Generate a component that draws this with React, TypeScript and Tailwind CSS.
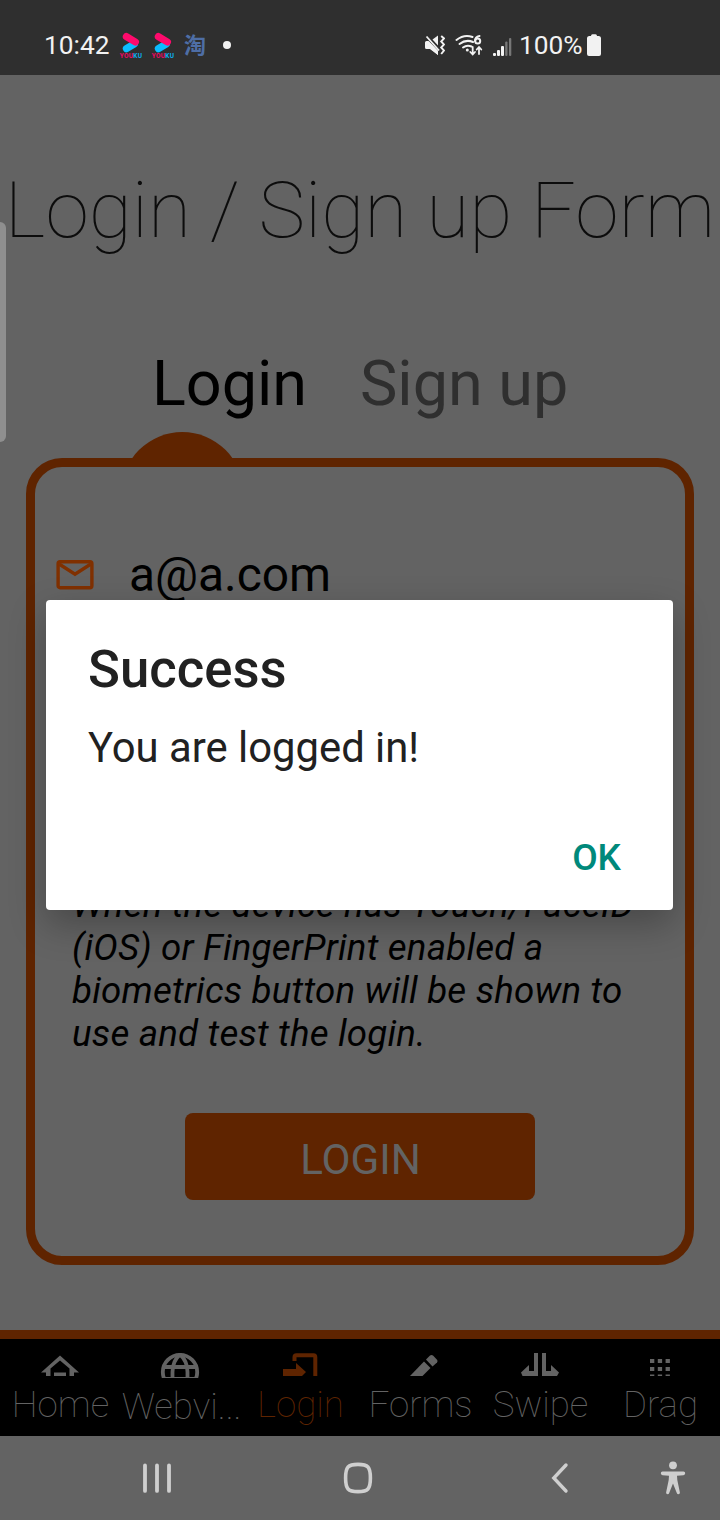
import type { ReactNode } from "react";

function YoukuIcon() {
  return (
    <div className="flex w-[22px] flex-col items-center">
      <svg width="18" height="21" viewBox="0 0 18 21">
        <line x1="4.4" y1="16.6" x2="12.4" y2="11.8" stroke="#0bbcff" strokeWidth="7.2" strokeLinecap="round" />
        <line x1="4.4" y1="4.6" x2="13.4" y2="10" stroke="#ff0a6c" strokeWidth="7.2" strokeLinecap="round" />
      </svg>
      <div className="mt-px flex h-[5px] items-center text-[6.5px] leading-[5px] font-bold tracking-[0.3px]">
        <span className="text-[#f00a68]">YOU</span>
        <span className="text-[#0bb0f0]">KU</span>
      </div>
    </div>
  );
}

function StatusBar() {
  return (
    <header className="flex h-[75px] shrink-0 items-start bg-[#2f2f2f] pt-[30px] pl-[44px] text-[#f2f2f2]">
      <div className="w-[76px] text-[26.3px] leading-[30px]">10:42</div>
      <div className="flex gap-[10px] pt-[2px]">
        <YoukuIcon />
        <YoukuIcon />
      </div>
      <div className="-mt-[2px] ml-[10px] w-[22px] font-['Noto_Sans_CJK_SC',sans-serif] text-[22px] leading-[30px] font-bold text-[#4e6ea6]">淘</div>
      <div className="mt-[11px] ml-[17px] size-[8px] rounded-full bg-[#f2f2f2]" />
      <svg className="mt-[3px] ml-[194px]" width="20" height="24" viewBox="0 0 20 24" fill="#f2f2f2">
        <path d="M0 9.5Q0 8 1.5 8H3.5L13 18V22L5.5 16H1.5Q0 16 0 14.5Z" />
        <path d="M7.5 6.5L13 2.5V12.5Z" />
        <path d="M1.5 3.5L14 17.5" stroke="#f2f2f2" strokeWidth="1.8" />
        <path d="M3.5 8L13 18V22L5 16Z" />
        <path d="M16.2 3L19 5.5L16.2 8.5L19 11.5L16.2 14.5L19 17.5L16.2 21" fill="none" stroke="#f2f2f2" strokeWidth="1.9" />
      </svg>
      <svg className="mt-[4px] ml-[10px]" width="28" height="24" viewBox="0 0 28 24" fill="none" stroke="#f2f2f2" strokeWidth="2" strokeLinecap="round">
        <path d="M1.5 6Q9 0 17.5 3" />
        <path d="M4.5 10Q11 5 18 8" />
        <path d="M8 13.5Q12 10.5 16.5 12.5" />
        <circle cx="12.3" cy="16" r="1.5" fill="#f2f2f2" stroke="none" />
        <path d="M24.5 2Q20 3 20 7" />
        <circle cx="22.7" cy="7" r="2.5" />
        <path d="M17.7 13V20M15.3 18L17.7 20.5L20 18M24 20V13.5M21.7 15.5L24 13L26.3 15.5" strokeWidth="1.8" />
      </svg>
      <svg className="mt-[6px] ml-[10px]" width="20" height="21" viewBox="0 0 20 21">
        <rect x="0" y="17" width="3" height="3" rx="1" fill="#f2f2f2" />
        <rect x="4" y="14" width="3" height="6" rx="1" fill="#f2f2f2" />
        <rect x="8" y="10" width="3" height="10" rx="1" fill="#f2f2f2" />
        <rect x="12.2" y="5.5" width="2.3" height="14.5" rx="1" fill="#777" />
        <rect x="16" y="2" width="2.3" height="18" rx="1" fill="#777" />
      </svg>
      <div className="ml-[6px] w-[68px] text-[26.3px] leading-[30px]">100%</div>
      <svg className="mt-[4px]" width="14" height="22" viewBox="0 0 14 22" fill="#f2f2f2">
        <path d="M4 2Q4 .3 5.5 .3H8.5Q10 .3 10 2H12Q14 2.3 14 4V20Q14 22 12 22H2Q0 22 0 20V4Q0 2.3 2 2Z" />
      </svg>
    </header>
  );
}

function LoginForm() {
  return (
    <section className="mx-[26px] flex h-[807px] shrink-0 flex-col rounded-[36px] border-[9px] border-[#5f2400]">
      <div className="mt-[78px] flex h-[60px] items-center pl-[21px]">
        <svg width="38" height="30" viewBox="0 0 38 30" fill="none" stroke="#803000" strokeWidth="3.4">
          <rect x="2.1" y="1.7" width="33.8" height="26" rx="2" />
          <path d="M3.5 4.3L19 14.3L34.5 4.3" />
        </svg>
        <div className="ml-[35px] text-[47.9px] leading-[60px] text-black">a@a.com</div>
      </div>
      <p className="mt-[278px] h-[172px] pl-[37px] text-[36.7px] leading-[43px] tracking-[0.2px] whitespace-pre text-black italic">
        {"When the device has Touch/FaceID\n(iOS) or FingerPrint enabled a\nbiometrics button will be shown to\nuse and test the login."}
      </p>
      <button className="mt-[58px] h-[87px] w-[350px] self-center rounded-[8px] bg-[#5f2400] pt-[6px] pl-px text-[42.2px] text-[#636363]">
        LOGIN
      </button>
    </section>
  );
}

function Dialog() {
  return (
    <div role="dialog" className="absolute top-[600px] left-[46px] flex h-[310px] w-[627px] flex-col rounded-[4px] bg-white pt-[38px] pl-[42px] shadow-[0_14px_36px_rgba(0,0,0,0.28)]">
      <h2 className="text-[52.7px] leading-[62px] font-medium text-[#212121]">Success</h2>
      <p className="mt-[23px] text-[41.8px] leading-[50px] text-[#212121]">You are logged in!</p>
      <button className="mt-[63px] mr-[52px] self-end text-[37px] leading-[44px] font-medium text-[#00897b]">OK</button>
    </div>
  );
}

function Tab({ label, children, active, tall }: { label: string; children: ReactNode; active?: boolean; tall?: boolean }) {
  return (
    <div className={`flex w-[120px] flex-col items-center ${active ? "text-[#5f2400]" : "text-[#636363]"}`}>
      <svg className="mt-[12px] shrink-0" width="40" height={tall ? 27 : 25} viewBox={tall ? "0 0 40 27" : "0 0 40 25"} fill="currentColor">
        {children}
      </svg>
      <span className={`mt-[7px] text-[36.7px] leading-[44px] font-thin whitespace-nowrap ${tall ? "pl-[3px]" : "pl-px"}`}>{label}</span>
    </div>
  );
}

function TabBar() {
  return (
    <nav className="flex h-[106px] shrink-0 border-t-[9px] border-[#5f2400] bg-black">
      <Tab label="Home">
        <path fillRule="evenodd" d="M20 4.5L39 21.5H34V25H29.5V17.5L20 9.5L10.5 17.5V25H6V21.5H1Z" />
        <rect x="14" y="21.5" width="12" height="4" />
      </Tab>
      <Tab label="Webvi..." tall>
        <g fill="none" stroke="currentColor" strokeWidth="3.8">
          <circle cx="20" cy="21" r="17.2" />
          <path d="M3 16H37M4 27.8H36" />
          <path d="M20 3.5Q12.5 10 12.5 21V29M20 3.5Q27.5 10 27.5 21V29" />
        </g>
      </Tab>
      <Tab label="Login" active>
        <path d="M12.5 10V6.3Q12.5 2.3 16.5 2.3H33.5Q37.3 2.3 37.3 6.3V25H33.3V6.3H16.5V10Z" />
        <path d="M3 18H16V12L26 21L22 25H3Z" />
      </Tab>
      <Tab label="Forms">
        <path d="M10 25L24 10.5L30.5 17L22.5 25Z" />
        <path d="M26 8.5L30 4.5Q31.5 3.3 33 4.5L37 8.7Q38.2 10 37 11.5L32.5 15.5Z" />
      </Tab>
      <Tab label="Swipe">
        <path d="M14 2H18V25H2.5L1 21.5L9 14V20H14Z" />
        <path d="M22 2H26V20H31V14L39 21.5L37 25H22Z" />
      </Tab>
      <Tab label="Drag">
        <path d="M10 8h4.3v4H10zM17.8 8h4.3v4H17.8zM25.6 8h4.3v4H25.6zM10 16h4.3v4H10zM17.8 16h4.3v4H17.8zM25.6 16h4.3v4H25.6zM10 23.6h4.3v2H10zM17.8 23.6h4.3v2H17.8zM25.6 23.6h4.3v2H25.6z" />
      </Tab>
    </nav>
  );
}

function SystemNav() {
  return (
    <footer className="flex h-[84px] shrink-0 items-center text-[#cfcfcf]">
      <svg className="ml-[141px]" width="32" height="34" viewBox="0 0 32 34" stroke="currentColor" strokeWidth="3.8" strokeLinecap="round">
        <path d="M4 5V30.5M16 5V30.5M28 5V30.5" transform="translate(0 -.6)" />
      </svg>
      <svg className="ml-[169px]" width="32" height="34" viewBox="0 0 32 34" fill="none" stroke="currentColor" strokeWidth="3.6">
        <path d="M16 3.4C26 3.4 28.4 6 28.4 17S26 30.6 16 30.6S3.6 28 3.6 17S6 3.4 16 3.4Z" />
      </svg>
      <svg className="ml-[173px]" width="24" height="34" viewBox="0 0 24 34" fill="none" stroke="currentColor" strokeWidth="3.4" strokeLinecap="round">
        <path d="M19 4L6.8 17L19 30" />
      </svg>
      <svg className="ml-[88px]" width="28" height="36" viewBox="0 0 28 36" fill="currentColor">
        <circle cx="14" cy="5.3" r="3.9" />
        <path d="M3.5 11.5H24.5Q26.2 11.5 26.2 13.2T24.5 15.2L18 15.8L18.3 20L20.9 32.5Q21 34 19.4 34.2Q18.2 34.2 17.8 33L14 23.5L10.2 33Q9.8 34.2 8.6 34.2Q7 34 7.1 32.5L9.7 20L10 15.8L3.5 15.2Q1.8 14.8 1.8 13.2T3.5 11.5Z" />
      </svg>
    </footer>
  );
}

export default function App() {
  return (
    <div className="relative flex h-[1520px] w-[720px] flex-col overflow-hidden bg-[#636363] font-[Roboto,sans-serif]">
      <StatusBar />
      <main className="flex h-[1255px] shrink-0 flex-col">
        <h1 className="mt-[89px] text-center text-[78.6px] leading-[92px] font-thin whitespace-nowrap text-[#0c0c0c]">Login / Sign up Form</h1>
        <div className="mt-[90px] flex h-[86px] text-[62.9px] leading-[75px]">
          <span className="ml-[152px] w-[208px] text-black">Login</span>
          <span className="text-[#2f2f2f]">Sign up</span>
        </div>
        <svg className="ml-[132px] shrink-0" width="101" height="26" viewBox="0 0 101 26">
          <circle cx="50.3" cy="61" r="61" fill="#5f2400" />
        </svg>
        <LoginForm />
      </main>
      <TabBar />
      <SystemNav />
      <div className="absolute top-[222px] left-0 h-[220px] w-[6px] rounded-r-[6px] bg-[#8f8f8f]" />
      <Dialog />
    </div>
  );
}
